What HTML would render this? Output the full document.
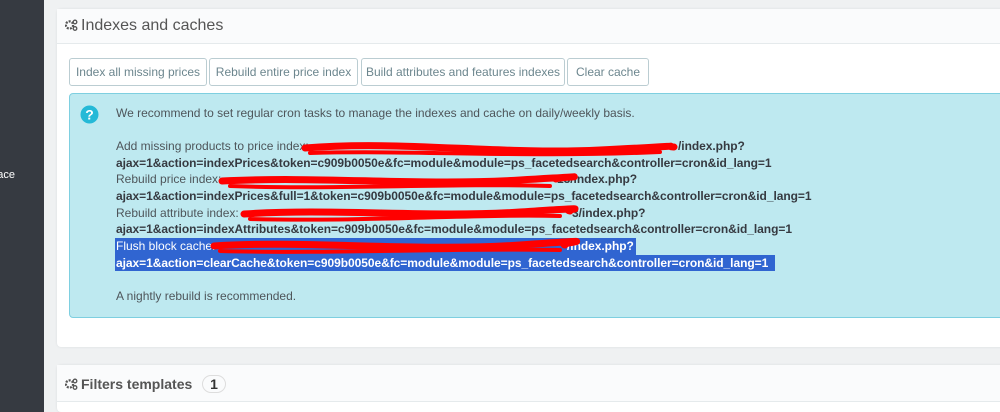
<!DOCTYPE html>
<html><head><meta charset="utf-8"><style>
*{margin:0;padding:0;box-sizing:border-box}
html,body{width:1000px;height:412px;overflow:hidden}
body{background:#eff1f2;font-family:"Liberation Sans",sans-serif;position:relative;color:#555}
.side{position:absolute;left:0;top:0;width:44px;height:412px;background:#363a41}
.side span{position:absolute;left:0;top:169px;color:#fff;font-size:11px;width:15px;overflow:hidden;direction:rtl}
.panel{position:absolute;left:57px;width:960px;background:#fff;border-radius:4px;box-shadow:0 0 2px #d8dbdd}
.ph{height:35px;background:#fafbfc;border-bottom:1px solid #e5eaec;font-size:16px;color:#555;padding:8px 0 0 8px}
.ph svg{vertical-align:-1px;margin-right:3px}
.btn{position:absolute;top:49px;height:28px;border:1px solid #bbcdd2;border-radius:3px;font-size:12px;color:#6c868e;text-align:center;line-height:26px;background:#fff}
.alert{position:absolute;left:12px;top:84px;width:950px;height:225px;background:#bee9f0;border:1px solid #7ecfe0;border-radius:4px}
.t{position:absolute;font-size:12px;color:#4e555a;white-space:nowrap}
.b{font-weight:bold;color:#363a41;font-size:12px;letter-spacing:-0.05px}
.sel{background:#3065d1;color:#fff}
.badge{display:inline-block;border:1px solid #ddd;border-radius:10px;padding:0 7px;font-weight:bold;font-size:14px;margin-left:6px;color:#333}
</style></head><body>
<div class="side"><span>place</span></div>
<div class="panel" style="top:9px;height:338px">
<div class="ph"><svg width="13" height="12" viewBox="0 0 13 12"><circle cx="4.5" cy="6" r="3.6" fill="none" stroke="#555" stroke-width="2.2" stroke-dasharray="2 1.2"/><circle cx="10" cy="3" r="1.8" fill="none" stroke="#555" stroke-width="1.3"/><circle cx="10" cy="9.5" r="1.8" fill="none" stroke="#555" stroke-width="1.3"/></svg>Indexes and caches</div>
<div class="btn" style="left:12px;width:138px">Index all missing prices</div>
<div class="btn" style="left:152px;width:149px">Rebuild entire price index</div>
<div class="btn" style="left:304px;width:204px">Build attributes and features indexes</div>
<div class="btn" style="left:510px;width:82px">Clear cache</div>
<div class="alert"></div>
</div>
<div class="panel" style="top:365px;height:47px">
<div class="ph" style="height:37px;font-weight:bold;font-size:14px;padding-top:10px"><svg width="13" height="12" viewBox="0 0 13 12"><circle cx="4.5" cy="6" r="3.6" fill="none" stroke="#555" stroke-width="2.2" stroke-dasharray="2 1.2"/><circle cx="10" cy="3" r="1.8" fill="none" stroke="#555" stroke-width="1.3"/><circle cx="10" cy="9.5" r="1.8" fill="none" stroke="#555" stroke-width="1.3"/></svg>Filters templates <span class="badge">1</span></div>
</div>
<svg style="position:absolute;left:80px;top:105px" width="19" height="19"><circle cx="9.5" cy="9.5" r="9" fill="#25b9d7"/><text x="9.5" y="14.5" font-size="14" font-weight="bold" fill="#fff" text-anchor="middle" font-family="Liberation Sans">?</text></svg>
<div class="t" style="left:116px;top:106px">We recommend to set regular cron tasks to manage the indexes and cache on daily/weekly basis.</div>
<div class="sel" style="position:absolute;left:115px;top:238px;width:521px;height:17px"></div>
<div class="sel" style="position:absolute;left:115px;top:255px;width:660px;height:16px"></div>
<div class="t" style="left:116px;top:139px">Add missing products to price index:</div>
<div class="t b" style="left:678px;top:139px">/index.php?</div>
<div class="t b" style="left:116px;top:156px">ajax=1&amp;action=indexPrices&amp;token=c909b0050e&amp;fc=module&amp;module=ps_facetedsearch&amp;controller=cron&amp;id_lang=1</div>
<div class="t" style="left:116px;top:172px">Rebuild price index:</div>
<div class="t b" style="left:557px;top:172px">13/index.php?</div>
<div class="t b" style="left:116px;top:189px">ajax=1&amp;action=indexPrices&amp;full=1&amp;token=c909b0050e&amp;fc=module&amp;module=ps_facetedsearch&amp;controller=cron&amp;id_lang=1</div>
<div class="t" style="left:116px;top:206px">Rebuild attribute index:</div>
<div class="t b" style="left:572px;top:206px">3/index.php?</div>
<div class="t b" style="left:116px;top:222px">ajax=1&amp;action=indexAttributes&amp;token=c909b0050e&amp;fc=module&amp;module=ps_facetedsearch&amp;controller=cron&amp;id_lang=1</div>
<div class="t" style="left:116px;top:239px;color:#fff">Flush block cache:</div>
<div class="t b" style="left:567px;top:239px;color:#fff">/index.php?</div>
<div class="t b" style="left:116px;top:256px;color:#fff">ajax=1&amp;action=clearCache&amp;token=c909b0050e&amp;fc=module&amp;module=ps_facetedsearch&amp;controller=cron&amp;id_lang=1</div>
<div class="t" style="left:116px;top:289px">A nightly rebuild is recommended.</div>
<svg style="position:absolute;left:0;top:0" width="1000" height="412"><g fill="none" stroke="#f00" stroke-linecap="round">
<path d="M305 148 C400 140 500 155 600 150 S660 146 674 147" stroke-width="7"/>
<path d="M310 153 C420 150 520 158 660 152" stroke-width="4"/>
<path d="M222 181 C320 176 420 186 520 180 S550 178 556 179" stroke-width="7"/>
<path d="M230 186 C330 190 450 183 550 186" stroke-width="4"/>
<path d="M244 214 C330 208 430 218 520 212 S560 210 570 211" stroke-width="7"/>
<path d="M250 219 C360 222 470 214 560 216" stroke-width="4"/>
<path d="M214 246 C300 240 420 252 520 245 S555 243 565 245" stroke-width="7"/>
<path d="M220 251 C330 254 450 248 560 250" stroke-width="4"/>
</g></svg>
</body></html>
